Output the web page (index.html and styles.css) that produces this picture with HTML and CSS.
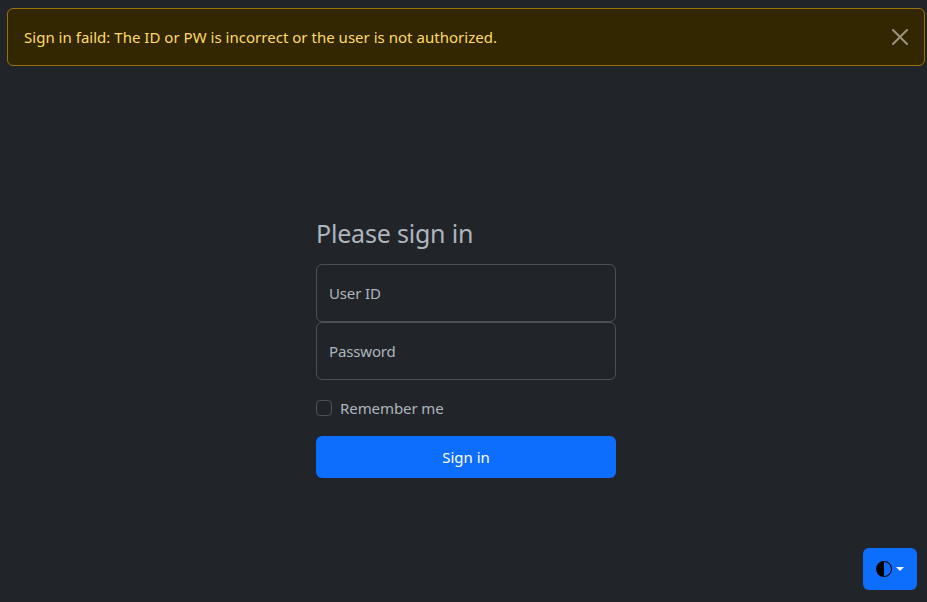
FILE: index.html
```html
<!DOCTYPE html>
<html lang="en">
<head>
<meta charset="utf-8">
<title>Sign in</title>
<link rel="stylesheet" href="styles.css">
</head>
<body>
<div class="alert" role="alert">
  <span class="alert-text">Sign in faild: The ID or PW is incorrect or the user is not authorized.</span>
  <button class="btn-close" type="button" aria-label="Close">
    <svg width="16" height="16" viewBox="0 0 16 16" fill="#fff"><path d="M.293.293a1 1 0 0 1 1.414 0L8 6.586 14.293.293a1 1 0 1 1 1.414 1.414L9.414 8l6.293 6.293a1 1 0 0 1-1.414 1.414L8 9.414l-6.293 6.293a1 1 0 0 1-1.414-1.414L6.586 8 .293 1.707a1 1 0 0 1 0-1.414z"/></svg>
  </button>
</div>
<main class="form-signin">
  <h1 class="title">Please sign in</h1>
  <label class="field"><span class="field-label">User ID</span></label>
  <label class="field"><span class="field-label">Password</span></label>
  <label class="check"><input class="check-input" type="checkbox"><span class="check-label">Remember me</span></label>
  <button class="btn submit" type="submit">Sign in</button>
</main>
<button class="btn theme-toggle" type="button" aria-label="Toggle theme">
  <svg width="16" height="16" viewBox="0 0 16 16" fill="#000"><path d="M8 15A7 7 0 1 0 8 1v14zm0 1A8 8 0 1 1 8 0a8 8 0 0 1 0 16z"/></svg>
  <span class="caret"></span>
</button>
</body>
</html>
```
FILE: styles.css
```css
* { box-sizing: border-box; }
body {
  margin: 0;
  height: 602px;
  padding: 8px 2px 12px 7px;
  display: flex;
  flex-direction: column;
  overflow: hidden;
  background: #212529;
  color: #adb5bd;
  font: 15px/24px "Segoe UI", "Noto Sans", "Open Sans", sans-serif;
}
button { font: inherit; border: 0; }
.alert {
  display: flex;
  align-items: center;
  justify-content: space-between;
  height: 58px;
  padding: 0 16px;
  border: 1px solid #997404;
  border-radius: 6px;
  background: #332701;
  color: #ffda6a;
}
.alert-text {
  letter-spacing: .02px;
  white-space: nowrap;
}
.btn-close {
  display: flex;
  padding: 0;
  background: none;
  opacity: .5;
}
.form-signin {
  display: flex;
  flex-direction: column;
  width: 300px;
  margin: 149px auto 0;
}
.title {
  margin: 0 0 8px;
  height: 41px;
  font-size: 25px;
  font-weight: 400;
  line-height: 36px;
  letter-spacing: -.2px;
  white-space: nowrap;
}
.field {
  display: flex;
  align-items: center;
  height: 58px;
  padding: 0 12px;
  border: 1px solid #495057;
  border-radius: 6px;
}
.field-label { letter-spacing: -.15px; }
.check {
  display: flex;
  align-items: center;
  gap: 8px;
  height: 24px;
  margin: 16px 0;
}
.check-label { letter-spacing: -.08px; }
.check-input {
  appearance: none;
  width: 16px;
  height: 16px;
  margin: 0;
  border: 1px solid #495057;
  border-radius: 4px;
}
.btn {
  display: flex;
  align-items: center;
  justify-content: center;
  height: 42px;
  border-radius: 6px;
  background: #0d6efd;
  color: #fff;
}
.theme-toggle {
  width: 54px;
  margin: auto 8px 0 auto;
  padding: 0;
  gap: 4px;
}
.caret {
  border-top: 4.8px solid #fff;
  border-right: 4.8px solid transparent;
  border-left: 4.8px solid transparent;
}
```
